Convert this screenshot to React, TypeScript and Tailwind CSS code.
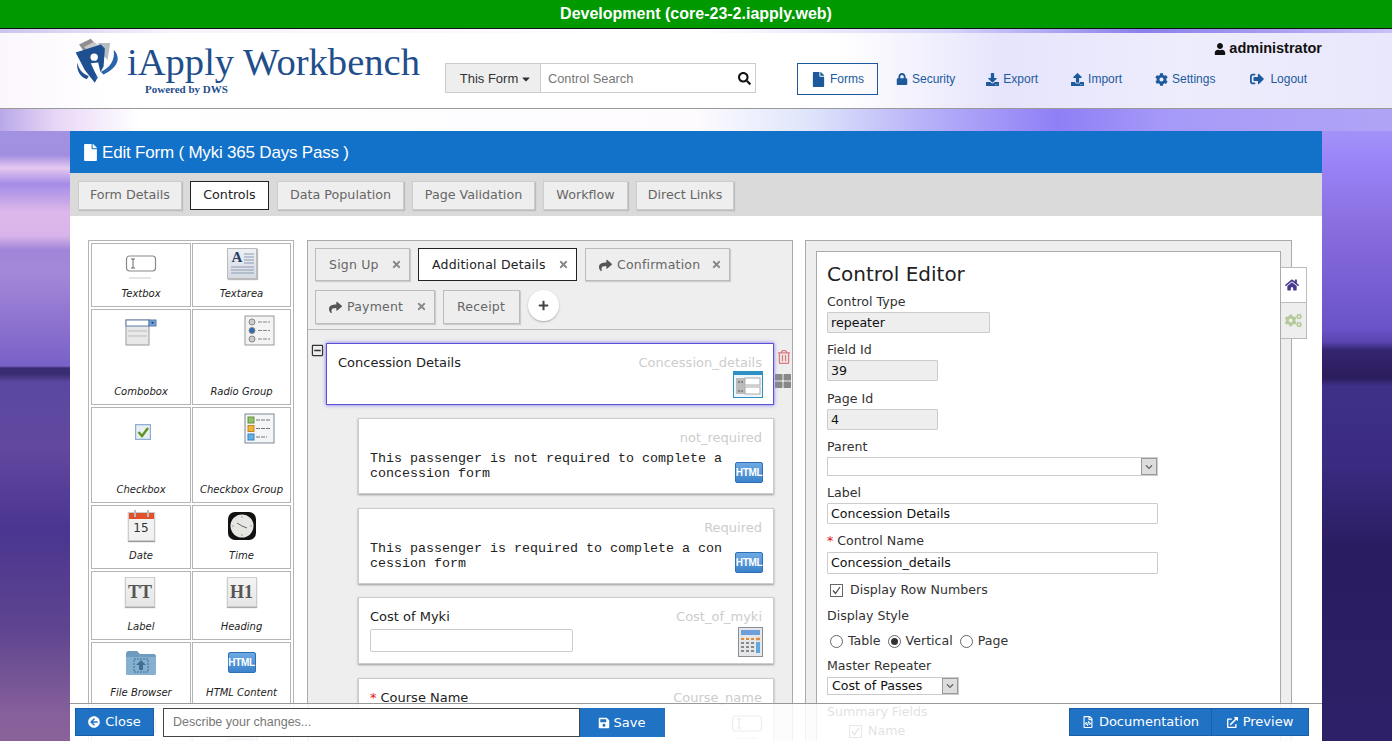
import React from 'react';
import {
  FaArrowCircleLeft,
  FaCaretDown,
  FaChevronDown,
  FaCog,
  FaCogs,
  FaDownload,
  FaExternalLinkAlt,
  FaFile,
  FaHome,
  FaLock,
  FaPlus,
  FaRegFileCode,
  FaRegMinusSquare,
  FaRegTrashAlt,
  FaSave,
  FaSearch,
  FaShare,
  FaSignOutAlt,
  FaThLarge,
  FaTimes,
  FaUpload,
  FaUser,
} from 'react-icons/fa';

function Logo() {
  return (
    <svg width="47" height="47" viewBox="40 20 140 140" className="shrink-0">
      <path d="M55 42 L90 25 L108 46 L72 66 Z" fill="#8f8f8f" />
      <path d="M70 50 L100 34 L118 50 L88 66 Z" fill="#c9c9c9" />
      <path d="M112 38 L148 38 L140 88 L118 66 Z" fill="#b7bbc2" />
      <path d="M45 66 L120 42 L132 54 L128 108 L102 156 L72 118 Z" fill="#1d4f91" />
      <path d="M50 96 C54 118 68 132 84 136 L78 146 C60 140 46 120 50 96 Z" fill="#1d4f91" />
      <path d="M158 58 C182 82 170 112 128 132 L100 146 L108 128 C142 118 164 92 158 58 Z" fill="#2a64aa" />
      <circle cx="100" cy="80" r="11" fill="#fff" />
      <path d="M90 98 L112 96 L118 122 L132 136 L112 142 L102 124 Z" fill="#fff" />
    </svg>
  );
}

function TextboxIcon() {
  return (
    <svg width="32" height="30" viewBox="0 0 32 30">
      <rect x="1.5" y="3" width="29" height="15" rx="3" fill="#fff" stroke="#888" strokeWidth="1.2" />
      <path d="M6 6 H10 M8 6 V15 M6 15 H10" stroke="#666" fill="none" />
      <path d="M4 25 H26" stroke="#ddd" strokeWidth="1.5" />
    </svg>
  );
}

function TextareaIcon() {
  return (
    <div className="relative w-[30px] h-[31px] border border-[#bbb] bg-[linear-gradient(180deg,#eef0f4,#d5dae2)] shadow-[1px_1px_1px_#bbb]">
      <span className="absolute left-[4px] top-[-2px] text-[15px] font-bold leading-[20px] text-[#2c3e66] font-['Liberation_Serif',serif]">A</span>
      <svg width="28" height="29" viewBox="0 0 28 29" className="absolute left-0 top-0">
        <path d="M16 5 H26 M16 8 H26 M16 11 H26 M16 14 H26 M3 18 H26 M3 21 H26 M3 24 H26" stroke="#8c9bb5" />
      </svg>
    </div>
  );
}

function ComboIcon() {
  return (
    <svg width="32" height="27" viewBox="0 0 32 27">
      <rect x="1" y="1" width="23" height="25" fill="#e8e8e8" stroke="#999" />
      <rect x="1" y="1" width="23" height="6" fill="#fff" stroke="#5b7ca8" />
      <rect x="24" y="1" width="7" height="6" fill="#6f9fd6" stroke="#5b7ca8" />
      <path d="M26 3 H29 L27.5 5 Z" fill="#123a70" />
      <path d="M3 12 H22 M3 17 H22" stroke="#bbb" />
    </svg>
  );
}

function RadioGroupIcon() {
  return (
    <svg width="31" height="31" viewBox="0 0 31 31">
      <rect x="1" y="1" width="29" height="29" fill="#f3f3f3" stroke="#999" />
      <circle cx="8" cy="7" r="3" fill="#ccc" stroke="#888" />
      <circle cx="8" cy="15.5" r="3" fill="#2b6cb0" stroke="#888" />
      <circle cx="8" cy="24" r="3" fill="#ccc" stroke="#888" />
      <path d="M14 7 H26 M14 15.5 H26 M14 24 H26" stroke="#888" strokeDasharray="4 1" />
    </svg>
  );
}

function CheckIcon() {
  return (
    <svg width="16" height="16" viewBox="0 0 16 16">
      <rect x="0.5" y="0.5" width="15" height="15" fill="#e9eef5" stroke="#8fb0d4" strokeWidth="1.5" />
      <path d="M3.5 8 L7 12 L13 4" fill="none" stroke="#5f9420" strokeWidth="2.4" />
    </svg>
  );
}

function CheckGroupIcon() {
  return (
    <svg width="31" height="31" viewBox="0 0 31 31">
      <rect x="1" y="1" width="29" height="29" fill="#f4f5f7" stroke="#7c8796" />
      <rect x="4" y="4" width="6" height="6" fill="#8fc06a" stroke="#6a9040" />
      <rect x="4" y="12.5" width="6" height="6" fill="#f2b33d" stroke="#c08820" />
      <rect x="4" y="21" width="6" height="6" fill="#63b0e8" stroke="#3a80c0" />
      <path d="M12 7 H26 M12 15.5 H26 M12 24 H23" stroke="#777" strokeDasharray="4 1" />
    </svg>
  );
}

function DateIcon() {
  return (
    <div className="relative w-[27px] h-[29px] bg-[#f2f2f2] border border-[#ccc] shadow-[0_1px_1px_#999]">
      <div className="h-[6px] bg-[#e2512a]" />
      <div className="absolute left-[5px] top-[-3px] w-[2px] h-[7px] bg-[#bbb]" />
      <div className="absolute right-[5px] top-[-3px] w-[2px] h-[7px] bg-[#bbb]" />
      <span className="block text-center text-[12px] leading-[18px] text-[#333] font-['DejaVu_Sans',sans-serif]">15</span>
    </div>
  );
}

function TimeIcon() {
  return (
    <svg width="28" height="28" viewBox="0 0 28 28">
      <rect width="28" height="28" rx="7" fill="#111" />
      <circle cx="14" cy="14" r="11.5" fill="#e6e6e2" />
      <path d="M14 14 L9 11 M14 14 L19 16" stroke="#666" strokeWidth="1" />
      <circle cx="14" cy="5" r="0.7" fill="#888" />
      <circle cx="14" cy="23" r="0.7" fill="#888" />
      <circle cx="5" cy="14" r="0.7" fill="#888" />
      <circle cx="23" cy="14" r="0.7" fill="#888" />
    </svg>
  );
}

function GreyTile({ text }: { text: string }) {
  return (
    <div className="w-[30px] h-[30px] border border-[#ccc] bg-[linear-gradient(180deg,#f4f4f4,#e6e6e6)] shadow-[0_1px_1px_#aaa] flex items-center justify-center text-[18px] font-bold text-[#555] font-['Liberation_Serif',serif]">
      {text}
    </div>
  );
}

function FolderIcon() {
  return (
    <svg width="32" height="26" viewBox="0 0 32 26">
      <path d="M1 4 Q1 1 4 1 H12 L15 4 H29 Q31 4 31 7 V23 Q31 25 29 25 H3 Q1 25 1 23 Z" fill="#6d9cc0" />
      <path d="M1 7 H31 V23 Q31 25 29 25 H3 Q1 25 1 23 Z" fill="#86b0cf" />
      <rect x="9" y="9" width="14" height="13" fill="none" stroke="#3f6f95" strokeDasharray="2 1" />
      <path d="M16 10 L21 15 H18 V20 H14 V15 H11 Z" fill="#3f6f95" />
    </svg>
  );
}

function HtmlIcon() {
  return (
    <div className="w-[28px] h-[21px] rounded-[2px] border border-[#2d6fb5] bg-[linear-gradient(180deg,#6ea9e2,#3c83cc)] flex items-center justify-center text-[10px] font-bold tracking-[-0.3px] text-white font-['Liberation_Sans',sans-serif]">
      HTML
    </div>
  );
}

function RepeaterIcon() {
  return (
    <svg width="30" height="27" viewBox="0 0 30 27">
      <rect x="0.5" y="0.5" width="29" height="26" fill="#eef6fb" stroke="#2d8fc2" />
      <rect x="1" y="1" width="28" height="3" fill="#2d8fc2" />
      <rect x="3" y="7" width="9" height="16" fill="#bbb" />
      <rect x="12" y="7" width="15" height="7" fill="#fff" stroke="#aaa" />
      <rect x="12" y="16" width="15" height="7" fill="#fff" stroke="#aaa" />
      <path d="M5 11 H10 M5 20 H10" stroke="#555" strokeDasharray="2 1" />
    </svg>
  );
}

function CalcIcon() {
  return (
    <svg width="25" height="30" viewBox="0 0 25 30">
      <rect x="0.5" y="0.5" width="24" height="29" fill="#e5e6e8" stroke="#8a8f96" />
      <rect x="3" y="3" width="19" height="5" fill="#6d9fdc" />
      <path d="M3 12 H16" stroke="#e08a3c" strokeWidth="2" strokeDasharray="3 2" />
      <path d="M18 12 H22" stroke="#e08a3c" strokeWidth="2.5" />
      <path d="M3 16 H16 M3 20 H16 M3 24 H16" stroke="#888" strokeWidth="2" strokeDasharray="3 2" />
      <rect x="18" y="15" width="4" height="11" fill="#63a8dc" />
    </svg>
  );
}

const palette = [
  { label: 'Textbox', icon: <TextboxIcon />, cell: 'h-[64px] pt-[9px]', box: '' },
  { label: 'Textarea', icon: <TextareaIcon />, cell: 'h-[64px] pt-[4px]', box: '' },
  { label: 'Combobox', icon: <ComboIcon />, cell: 'h-[96px] pt-[9px]', box: '' },
  { label: 'Radio Group', icon: <RadioGroupIcon />, cell: 'h-[96px] pt-[5px]', box: 'ml-[36px]' },
  { label: 'Checkbox', icon: <CheckIcon />, cell: 'h-[96px] pt-[16px]', box: 'ml-[4px]' },
  { label: 'Checkbox Group', icon: <CheckGroupIcon />, cell: 'h-[96px] pt-[5px]', box: 'ml-[36px]' },
  { label: 'Date', icon: <DateIcon />, cell: 'h-[64px] pt-[6px]', box: '' },
  { label: 'Time', icon: <TimeIcon />, cell: 'h-[64px] pt-[6px]', box: '' },
  { label: 'Label', icon: <GreyTile text="TT" />, cell: 'h-[69px] pt-[5px]', box: 'mr-[2px]' },
  { label: 'Heading', icon: <GreyTile text="H1" />, cell: 'h-[69px] pt-[5px]', box: '' },
  { label: 'File Browser', icon: <FolderIcon />, cell: 'h-[64px] pt-[7px]', box: '' },
  { label: 'HTML Content', icon: <HtmlIcon />, cell: 'h-[64px] pt-[9px]', box: '' },
  { label: '', icon: <TextboxIcon />, cell: 'h-[64px] pt-[6px]', box: '' },
  { label: '', icon: <TextareaIcon />, cell: 'h-[64px] pt-[8px]', box: '' },
];

function Palette() {
  return (
    <div className="w-[206px] mr-[1px] shrink-0 border border-[#b5b5b5] p-[2px] grid grid-cols-[100px_99px] gap-x-[1px] gap-y-[2px] content-start h-[560px]">
      {palette.map((p, i) => (
        <div key={i} className={`${p.cell} border border-[#b5b5b5] flex flex-col items-center`}>
          <div className={p.box}>{p.icon}</div>
          {p.label && <div className="mt-auto mb-[6px] text-[10px] leading-[13px] italic text-[#222]">{p.label}</div>}
        </div>
      ))}
    </div>
  );
}

function PageTab({ label, active, share, closable = true, w }: { label: string; active?: boolean; share?: boolean; closable?: boolean; w: string }) {
  return (
    <div className={`${w} flex items-center justify-between pr-[7px] pt-[1px] border ${share ? 'pl-[13px]' : 'pl-[13px]'} ${active ? 'bg-white border-[#222] text-[#222]' : 'bg-[#eee] border-[#bbb] text-[#666] shadow-[1px_1px_1px_#ccc]'}`}>
      <span className="flex items-center gap-[5px] text-[12.5px] tracking-[0.2px]">
        {share && <FaShare className="text-[13px] text-[#555]" />}
        {label}
      </span>
      {closable && <FaTimes className="text-[11px] text-[#888] mb-[2px]" />}
    </div>
  );
}

function Card({ label, name, required, h, mt, children, icon, selected }: { label?: string; name: string; required?: boolean; h: string; mt: string; children?: React.ReactNode; icon: React.ReactNode; selected?: boolean }) {
  const box = selected
    ? 'ml-[18px] border-[#5a50d8] shadow-[0_0_4px_#7a70e8]'
    : 'ml-[50px] border-[#ccc] shadow-[0_1px_2px_#999]';
  return (
    <div className={`${h} ${mt} ${box} relative mr-[18px] shrink-0 bg-white border pl-[11px] pr-[11px]`}>
      <div className="flex justify-between items-start pt-[11px] text-[13px] leading-[16px]">
        <span className="text-[#222]">
          {required && <span className="text-[#e01010] mr-[4px]">*</span>}
          {label}
        </span>
        <span className="text-[#ccc]">{name}</span>
      </div>
      {children}
      <div className="absolute right-[10px] bottom-[6px]">{icon}</div>
    </div>
  );
}

function MonoText({ text }: { text: string }) {
  return (
    <div className="mt-[5px] w-[354px] break-all text-[13.33px] leading-[15px] text-[#222] font-['Liberation_Mono',monospace]">
      {text}
    </div>
  );
}

function FormTree() {
  return (
    <div className="flex-1 h-[560px] min-w-0 border border-[#aaa] bg-[#eee] overflow-hidden">
      <div className="px-[7px] pt-[7px] h-[89px] border-b border-[#bbb]">
        <div className="flex gap-[8px] h-[33px]">
          <PageTab label="Sign Up" w="w-[95px]" />
          <PageTab label="Additional Details" w="w-[159px]" active />
          <PageTab label="Confirmation" w="w-[145px]" share />
        </div>
        <div className="flex gap-[8px] h-[34px] mt-[9px]">
          <PageTab label="Payment" w="w-[120px]" share />
          <PageTab label="Receipt" w="w-[77px]" closable={false} />
          <div className="w-[31px] h-[31px] bg-white rounded-full shadow-[0_1px_2px_#aaa] flex items-center justify-center">
            <FaPlus className="text-[11px] text-[#444]" />
          </div>
        </div>
      </div>
      <div className="relative flex flex-col">
        <FaRegMinusSquare className="absolute left-[3px] top-[14px] text-[13px] text-[#333]" />
        <FaRegTrashAlt className="absolute left-[469px] top-[20px] text-[14px] text-[#d9797f]" />
        <FaThLarge className="absolute left-[467px] top-[43px] text-[16px] text-[#888]" />
        <Card label="Concession Details" name="Concession_details" h="h-[62px]" mt="mt-[13px]" icon={<RepeaterIcon />} selected />
        <Card name="not_required" h="h-[76px]" mt="mt-[13px]" icon={<div className="mb-[4px]"><HtmlIcon /></div>}>
          <MonoText text="This passenger is not required to complete a concession form" />
        </Card>
        <Card name="Required" h="h-[76px]" mt="mt-[14px]" icon={<div className="mb-[4px]"><HtmlIcon /></div>}>
          <MonoText text="This passenger is required to complete a concession form" />
        </Card>
        <Card label="Cost of Myki" name="Cost_of_myki" h="h-[67px]" mt="mt-[13px]" icon={<CalcIcon />}>
          <div className="mt-[4px] w-[203px] h-[23px] border border-[#ccc] rounded-[2px]" />
        </Card>
        <Card label="Course Name" name="Course_name" required h="h-[67px]" mt="mt-[14px]" icon={<div className="-mb-[5px]"><TextboxIcon /></div>} />
      </div>
    </div>
  );
}

function Label({ children, mt = 'mt-[8px]' }: { children: React.ReactNode; mt?: string }) {
  return <div className={`${mt} text-[12.6px] leading-[16px] text-[#333]`}>{children}</div>;
}

function Field({ value, w, h = 'h-[21px]', mt = 'mt-[3px]', grey }: { value: string; w: string; h?: string; mt?: string; grey?: boolean }) {
  return (
    <div className={`${w} ${h} ${mt} flex items-center px-[3px] pt-[1px] border border-[#ccc] rounded-[1px] text-[12.6px] text-[#111] ${grey ? 'bg-[#eee]' : 'bg-white'}`}>
      {value}
    </div>
  );
}

function SelectBox({ value, w, h, mt = 'mt-[3px]' }: { value: string; w: string; h: string; mt?: string }) {
  return (
    <div className={`${w} ${h} ${mt} flex items-stretch border border-[#ccc] bg-white text-[12.6px] text-[#111]`}>
      <span className="flex-1 px-[4px] flex items-center">{value}</span>
      <span className="w-[16px] bg-[#ddd] border border-[#999] flex items-center justify-center">
        <FaChevronDown className="text-[8px] text-[#666]" />
      </span>
    </div>
  );
}

function Radio({ label, on }: { label: string; on?: boolean }) {
  return (
    <span className="flex items-center gap-[5px]">
      <span className="w-[13px] h-[13px] rounded-full border border-[#666] bg-white flex items-center justify-center">
        {on && <span className="w-[7px] h-[7px] rounded-full bg-[#333]" />}
      </span>
      {label}
    </span>
  );
}

function Tick() {
  return (
    <span className="w-[13px] h-[13px] border border-[#666] bg-white flex items-center justify-center">
      <svg width="11" height="11" viewBox="0 0 11 11">
        <path d="M2 5.5 L4.5 8.5 L9 2" fill="none" stroke="#444" strokeWidth="1.2" />
      </svg>
    </span>
  );
}

function ControlEditor() {
  return (
    <div className="relative w-[487px] h-[560px] shrink-0 border border-[#aaa] bg-[#eee] pl-[10px] pr-[10px] pt-[10px]">
      <div className="h-[600px] border border-[#aaa] bg-white pl-[10px] pt-[10px]">
        <div className="text-[20px] leading-[24px] text-[#222]">Control Editor</div>
        <Label mt="mt-[8px]">Control Type</Label>
        <Field value="repeater" w="w-[163px]" mt="mt-[2px]" grey />
        <Label mt="mt-[9px]">Field Id</Label>
        <Field value="39" w="w-[111px]" mt="mt-[2px]" grey />
        <Label mt="mt-[10px]">Page Id</Label>
        <Field value="4" w="w-[111px]" mt="mt-[2px]" grey />
        <Label mt="mt-[9px]">Parent</Label>
        <SelectBox value="" w="w-[331px]" h="h-[19px]" mt="mt-[2px]" />
        <Label mt="mt-[9px]">Label</Label>
        <Field value="Concession Details" w="w-[331px]" mt="mt-[2px]" />
        <Label mt="mt-[9px]">
          <span className="text-[#e01010] mr-[4px]">*</span>Control Name
        </Label>
        <Field value="Concession_details" w="w-[331px]" h="h-[22px]" />
        <div className="mt-[8px] ml-[3px] flex items-center gap-[7px] text-[12.6px] leading-[16px] text-[#333]">
          <Tick />
          Display Row Numbers
        </div>
        <Label mt="mt-[10px]">Display Style</Label>
        <div className="mt-[9px] ml-[3px] flex items-center gap-[7px] text-[12.6px] leading-[16px] text-[#333]">
          <Radio label="Table" />
          <Radio label="Vertical" on />
          <Radio label="Page" />
        </div>
        <Label mt="mt-[9px]">Master Repeater</Label>
        <SelectBox value="Cost of Passes" w="w-[132px]" h="h-[18px]" />
        <Label mt="mt-[9px]">Summary Fields</Label>
        <div className="mt-[3px] ml-[22px] flex items-center gap-[6px] text-[12.6px] leading-[16px] text-[#333]">
          <Tick />
          Name
        </div>
      </div>
      <div className="absolute left-[475px] top-[26px] w-[26px] border border-[#bbb] border-l-0 flex flex-col">
        <div className="h-[35px] bg-white flex items-center justify-center pr-[4px] border-b border-[#bbb]">
          <FaHome className="text-[14px] text-[#453a8c]" />
        </div>
        <div className="h-[35px] bg-[#eee] flex items-center justify-center">
          <FaCogs className="text-[17px] text-[#b4c99a]" />
        </div>
      </div>
    </div>
  );
}

function NavItem({ icon, label, ml }: { icon: React.ReactNode; label: string; ml: string }) {
  return (
    <div className={`${ml} flex items-center gap-[4px] text-[#1c5a9c]`}>
      {icon}
      {label}
    </div>
  );
}

function Header() {
  return (
    <div className="h-[76px] border-b border-[#999] bg-[linear-gradient(90deg,#fbf6fd_0%,#fff_8%,#fff_60%,#e6e4fc_72%,#eeedfd_85%,#e9e7fb_100%)] flex pl-[74px] font-['Liberation_Sans',sans-serif]">
      <div className="w-[371px] shrink-0 pt-[4px] flex items-start">
        <Logo />
        <div className="ml-[6px] mt-[5px]">
          <div className="text-[38.6px] leading-[40px] text-[#1f4e8c] whitespace-nowrap font-['Liberation_Serif',serif]">iApply Workbench</div>
          <div className="ml-[18px] mt-[2px] text-[11px] leading-[11px] font-bold text-[#1f4e8c] font-['Liberation_Serif',serif]">Powered by DWS</div>
        </div>
      </div>
      <div className="w-[311px] h-[30px] mt-[30px] shrink-0 flex border border-[#ccc] bg-white">
        <div className="w-[95px] bg-[#eee] border-r border-[#ccc] flex items-center justify-center gap-[2px] pl-[6px] pt-[1px] text-[13px] text-[#333]">
          This Form
          <FaCaretDown className="text-[12px]" />
        </div>
        <input placeholder="Control Search" className="flex-1 min-w-0 pl-[7px] pt-[2px] text-[12.8px] placeholder:text-[#777] outline-none" />
        <div className="w-[24px] flex items-center justify-end pr-[4px]">
          <FaSearch className="text-[13px] text-[#111]" />
        </div>
      </div>
      <div className="ml-[41px] w-[525px] shrink-0 flex flex-col">
        <div className="mt-[7px] h-[18px] flex items-center justify-end gap-[3px] text-[14.5px] font-bold text-[#111]">
          <FaUser className="text-[12px]" />
          administrator
        </div>
        <div className="mt-[5px] flex items-center text-[12px]">
          <div className="w-[81px] h-[32px] border border-[#1c5a9c] flex items-center justify-center gap-[4px] text-[#1c5a9c]">
            <FaFile className="text-[15px]" />
            Forms
          </div>
          <NavItem ml="ml-[18px]" label="Security" icon={<FaLock className="text-[12px]" />} />
          <NavItem ml="ml-[31px]" label="Export" icon={<FaDownload className="text-[13px]" />} />
          <NavItem ml="ml-[33px]" label="Import" icon={<FaUpload className="text-[13px]" />} />
          <NavItem ml="ml-[33px]" label="Settings" icon={<FaCog className="text-[13px]" />} />
          <NavItem ml="ml-[35px]" label="Logout" icon={<FaSignOutAlt className="text-[14px] mr-[2px]" />} />
        </div>
      </div>
    </div>
  );
}

const tabs = [
  { label: 'Form Details', w: 'w-[104px]' },
  { label: 'Controls', w: 'w-[79px]' },
  { label: 'Data Population', w: 'w-[127px]' },
  { label: 'Page Validation', w: 'w-[123px]' },
  { label: 'Workflow', w: 'w-[85px]' },
  { label: 'Direct Links', w: 'w-[98px]' },
];

function BottomBar() {
  return (
    <div className="absolute left-[70px] top-[703px] w-[1252px] h-[38px] border-t border-[#999] bg-white/85 flex items-start pt-[4px] pl-[5px] pr-[13px] text-[13px] text-white">
      <div className="w-[79px] h-[28px] bg-[#1f72c4] border border-[#1a5fa5] flex items-center justify-center gap-[5px]">
        <FaArrowCircleLeft className="text-[12px]" />
        Close
      </div>
      <div className="ml-[9px] flex h-[29px]">
        <input placeholder="Describe your changes..." className="w-[417px] px-[9px] border border-[#444] bg-white text-[12.5px] placeholder:text-[#777] outline-none font-['Liberation_Sans',sans-serif]" />
        <div className="w-[85px] bg-[#1f72c4] flex items-center justify-center gap-[4px] pr-[2px]">
          <FaSave className="text-[12px]" />
          Save
        </div>
      </div>
      <div className="ml-auto flex h-[28px] bg-[#1f72c4] border border-[#1a5fa5]">
        <div className="w-[142px] flex items-center justify-center gap-[5px] border-r border-[#1a5fa5]">
          <FaRegFileCode className="text-[12px]" />
          Documentation
        </div>
        <div className="w-[96px] flex items-center justify-center gap-[5px]">
          <FaExternalLinkAlt className="text-[11px]" />
          Preview
        </div>
      </div>
    </div>
  );
}

export default function App() {
  return (
    <div className="relative h-[741px] overflow-hidden font-['DejaVu_Sans',sans-serif] [background:linear-gradient(180deg,#efe6fa_0px,#efe6fa_110px,#a493e2_125px,#a08ee0_155px,#e6c8f0_168px,#a48ce6_184px,#dcb8ea_212px,#d8b4ea_236px,#a084d8_250px,#a488d8_272px,#7a62c8_362px,#7a62c8_366px,#3a2c70_368px,#3a2c70_374px,#5a48a0_382px,#62489f_447px,#4a3590_530px,#5f4590_630px,#85609a_713px,#8a629a_741px)_left/50%_100%_no-repeat,linear-gradient(180deg,#c0b5f5_0px,#a89cf5_112px,#9a84f8_161px,#8a6fe0_222px,#6a52c8_329px,#5a44b0_342px,#342570_350px,#2b1c5c_378px,#3f3088_386px,#3a2a80_468px,#2a1c60_550px,#2e2068_741px)_right/50%_100%_no-repeat]">
      <div className="h-[29px] bg-[#009900] border-b border-[#111] flex items-center justify-center text-[16px] font-bold text-white font-['Liberation_Sans',sans-serif]">
        Development (core-23-2.iapply.web)
      </div>
      <div className="h-[4px] bg-[linear-gradient(90deg,#c9c4ee_0%,#f7f2fb_12%,#fff_50%,#d5d5fa_68%,#8a80ec_82%,#a9a0f0_92%,#c8c2f8_100%)]" />
      <Header />
      <div className="h-[22px] bg-[linear-gradient(90deg,#b9a8e8_0%,#e8d6f6_4%,#fff_10%,#fdfbfe_50%,#dfe6fb_58%,#b9b4f8_66%,#8f7ff6_76%,#a69af8_84%,#b0a4f6_100%)]" />
      <div className="mx-[70px] h-[610px] flex flex-col">
        <div className="h-[42px] shrink-0 bg-[#1271c8] flex items-center pl-[12px] pt-[1px] gap-[3px] text-[17px] tracking-[-0.2px] text-white font-['Liberation_Sans',sans-serif]">
          <FaFile className="text-[17px]" />
          Edit Form ( Myki 365 Days Pass )
        </div>
        <div className="h-[43px] shrink-0 bg-[#dadada] flex items-start gap-[8px] pl-[8px] pt-[8px]">
          {tabs.map((t) => (
            <div
              key={t.label}
              className={`${t.w} h-[29px] flex items-center justify-center pb-[1px] border text-[12.7px] ${
                t.label === 'Controls' ? 'bg-white border-[#222] text-[#222]' : 'bg-[#eee] border-[#ccc] text-[#666] shadow-[1px_1px_1px_#bbb]'
              }`}
            >
              {t.label}
            </div>
          ))}
        </div>
        <div className="flex-1 min-h-0 bg-white flex items-start gap-[12px] pl-[18px] pr-[30px] pt-[24px] overflow-hidden">
          <Palette />
          <FormTree />
          <ControlEditor />
        </div>
      </div>
      <BottomBar />
    </div>
  );
}
